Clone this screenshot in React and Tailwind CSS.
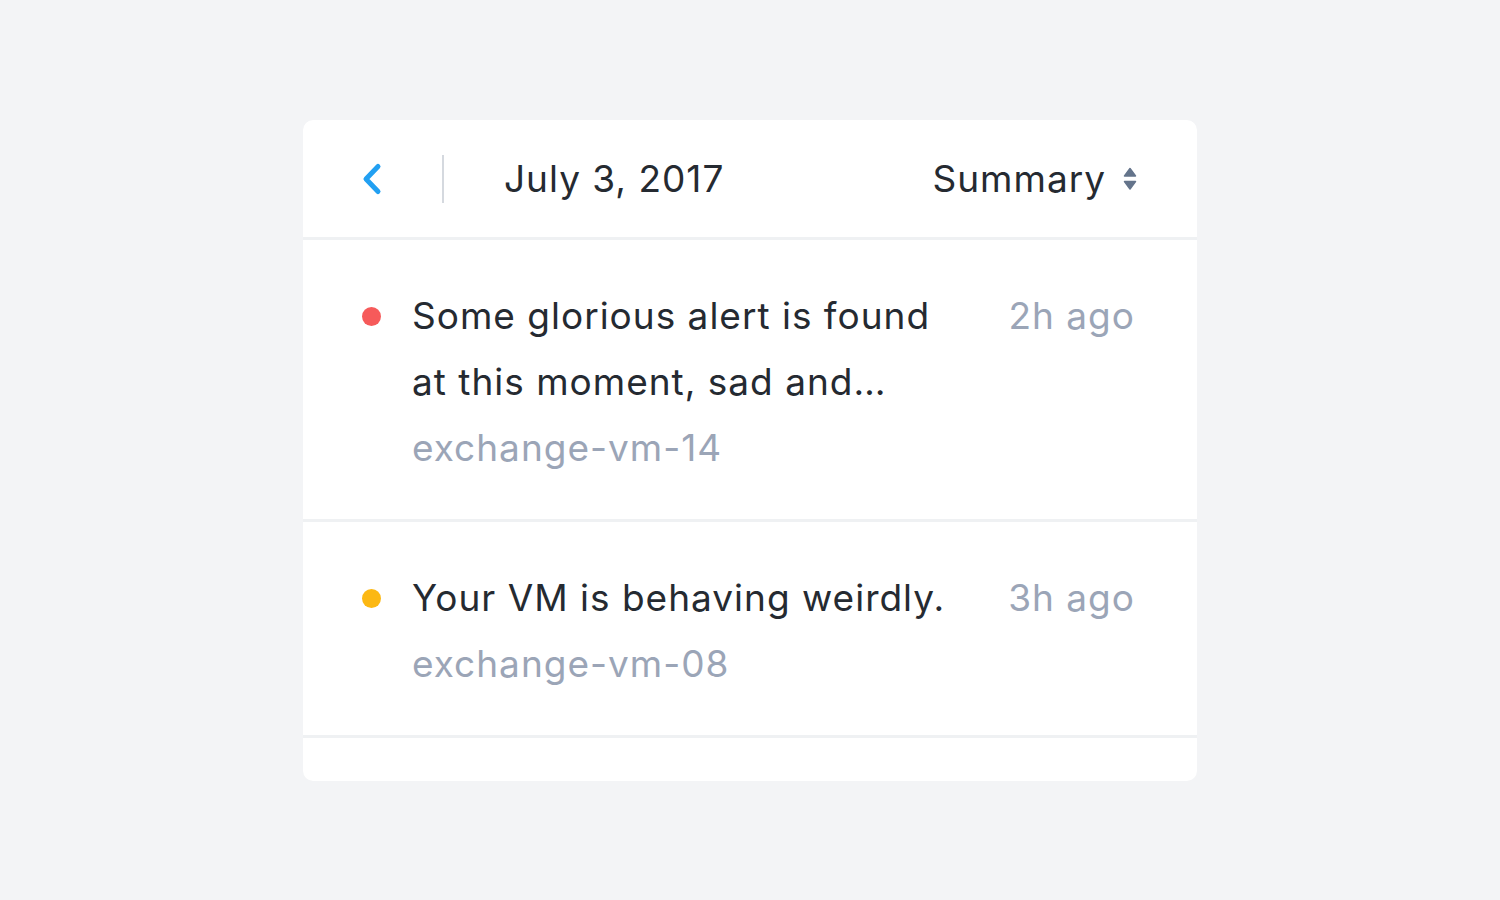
import React from "react";

const ALERTS = [
  {
    id: 1,
    color: "bg-[#f65a5a]",
    title: "Some glorious alert is found at this moment, sad and…",
    host: "exchange-vm-14",
    time: "2h ago",
  },
  {
    id: 2,
    color: "bg-[#fcb813]",
    title: "Your VM is behaving weirdly.",
    host: "exchange-vm-08",
    time: "3h ago",
  },
];

function ChevronLeft() {
  return (
    <svg width="22" height="34" viewBox="0 0 22 34" fill="none">
      <path d="M17 4.5 L5 17 L17 29.5" stroke="#22a0f2" strokeWidth="5" strokeLinecap="round" strokeLinejoin="round" />
    </svg>
  );
}

function SortIcon() {
  return (
    <svg width="14" height="26" viewBox="0 0 14 26" fill="#64748b" stroke="#64748b" strokeWidth="1.5" strokeLinejoin="round">
      <path d="M7 2.5 L12.5 10 L1.5 10 Z" />
      <path d="M1.5 15.5 L12.5 15.5 L7 23 Z" />
    </svg>
  );
}

function AlertRow({ alert }) {
  return (
    <div className="flex items-start bg-white pl-[59px] pr-[62px] pt-[43px] pb-[38px]">
      <div className="flex h-[66px] w-[50px] shrink-0 items-center">
        <span className={`h-[19px] w-[19px] rounded-full ${alert.color}`} />
      </div>
      <div className="w-[545px] shrink-0">
        <div className="text-[37px] leading-[66px] tracking-[1px] text-[#252a31]">{alert.title}</div>
        <div className="text-[37px] leading-[66px] tracking-[1px] text-[#9ba5b7]">{alert.host}</div>
      </div>
      <div className="ml-auto shrink-0 text-[37px] leading-[66px] tracking-[1px] text-[#9ba5b7]">{alert.time}</div>
    </div>
  );
}

export default function App() {
  return (
    <div className="flex min-h-[900px] items-start justify-center bg-[#f3f4f6] pt-[120px] font-['Inter',sans-serif]">
      <div className="flex w-[894px] flex-col gap-[3px] overflow-hidden rounded-[10px] bg-[#eff1f3]">
        <div className="flex h-[117px] items-center bg-white pl-[58px] pr-[60px]">
          <ChevronLeft />
          <div className="ml-[59px] h-[48px] w-[2px] bg-[#d5d9df]" />
          <div className="ml-[60px] text-[37px] tracking-[1px] text-[#252a31]">July 3, 2017</div>
          <div className="ml-auto flex items-center gap-[17px]">
            <span className="text-[37px] tracking-[1px] text-[#252a31]">Summary</span>
            <SortIcon />
          </div>
        </div>
        {ALERTS.map((a) => (
          <AlertRow key={a.id} alert={a} />
        ))}
        <div className="h-[43px] bg-white" />
      </div>
    </div>
  );
}
